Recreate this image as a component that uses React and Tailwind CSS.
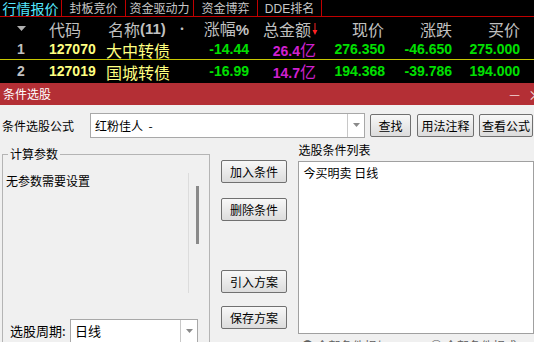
import React from "react";

const CJK = { fontFamily: '"Noto Sans CJK SC", "Liberation Sans", sans-serif' };
const NUM = { fontFamily: '"Liberation Sans", "Noto Sans CJK SC", sans-serif' };

function Btn({ children, className = "" }) {
  return (
    <div
      className={
        "flex h-[23px] items-center justify-center rounded-[2px] border border-[#707070] bg-linear-to-b from-[#f8f8f8] to-[#dcdcdc] text-[12px] leading-none text-black " +
        className
      }
    >
      {children}
    </div>
  );
}

function Arrow() {
  return (
    <svg width="7" height="5" viewBox="0 0 7 5">
      <path d="M0 0 L7 0 L3.5 4 Z" fill="#8a8a8a" />
    </svg>
  );
}

function Row({ idx, code, name, pct, amt, price, chg, buy, tall, line }) {
  return (
    <div
      className={
        "flex items-center " +
        (tall ? "h-[23px] " : "h-[20px] ") +
        (line ? "border-b border-[#c8c800]" : "")
      }
    >
      <div className="w-[42px] text-center text-[14px] font-bold text-[#c0c0c0]" style={NUM}>
        {idx}
      </div>
      <div className="w-[58px] pl-[7px] text-[14px] font-bold text-[#ffff80]" style={NUM}>
        {code}
      </div>
      <div className="w-[95px] pl-[6px] text-[16px] leading-[20px] text-[#ffff80]" style={CJK}>
        {name}
      </div>
      <div className="w-[57px] pr-[3px] text-right text-[14px] font-bold text-[#00e000]" style={NUM}>
        {pct}
      </div>
      <div className="w-[68px] pr-[4px] text-right text-[#d020d0]">
        <span className="text-[14px] font-bold" style={NUM}>
          {amt}
        </span>
        <span className="text-[16px] leading-[20px]" style={CJK}>
          亿
        </span>
      </div>
      <div className="w-[67px] pr-[2px] text-right text-[14px] font-bold text-[#00e000]" style={NUM}>
        {price}
      </div>
      <div className="w-[67px] pr-[2px] text-right text-[14px] font-bold text-[#00e000]" style={NUM}>
        {chg}
      </div>
      <div className="w-[68px] pr-[2px] text-right text-[14px] font-bold text-[#00e000]" style={NUM}>
        {buy}
      </div>
    </div>
  );
}

export default function App() {
  return (
    <div className="h-[342px] w-[534px] overflow-hidden bg-[#f0f0f0]" style={CJK}>
      {/* Quote board */}
      <div className="bg-black">
        <div className="flex h-[17px] border-b border-[#c00000] text-[12px] leading-[16px] text-[#c8c8c8]">
          <div className="w-[62px] border-r border-[#c00000] text-center text-[14px] text-[#55e8ff]">行情报价</div>
          <div className="w-[64px] border-r border-[#c00000] text-center">封板竞价</div>
          <div className="w-[68px] border-r border-[#c00000] text-center">资金驱动力</div>
          <div className="w-[64px] border-r border-[#c00000] text-center">资金博弈</div>
          <div className="w-[64px] border-r border-[#c00000] text-center" style={NUM}>
            DDE<span style={CJK}>排名</span>
          </div>
        </div>
        <div className="flex h-[23px] items-center text-[16px] leading-[20px] text-[#c0c0c0]">
          <div className="flex w-[42px] justify-center">
            <svg width="9" height="5" viewBox="0 0 9 5">
              <path d="M0 0 L9 0 L4.5 5 Z" fill="#b0b0b0" />
            </svg>
          </div>
          <div className="w-[58px] pl-[7px]">代码</div>
          <div className="flex w-[95px] items-center pl-[8px]">
            <span>名称</span>
            <span className="text-[15px] font-bold" style={NUM}>
              (11)
            </span>
            <span className="ml-[10px] text-[12px]">•</span>
          </div>
          <div className="w-[57px] pr-[3px] text-right">
            涨幅<span className="text-[15px] font-bold" style={NUM}>%</span>
          </div>
          <div className="flex w-[68px] items-center justify-end pr-[2px]">
            <span>总金额</span>
            <svg width="6" height="14" viewBox="0 0 6 14" className="ml-[1px]">
              <path d="M3 1 L3 10" stroke="#ff2020" strokeWidth="1" />
              <path d="M0.5 8 L5.5 8 L3 13 Z" fill="#ff2020" />
            </svg>
          </div>
          <div className="w-[67px] pr-[3px] text-right">现价</div>
          <div className="w-[67px] pr-[2px] text-right">涨跌</div>
          <div className="w-[68px] pr-[2px] text-right">买价</div>
        </div>
        <Row idx="1" code="127070" name="大中转债" pct="-14.44" amt="26.4" price="276.350" chg="-46.650" buy="275.000" line />
        <Row idx="2" code="127019" name="国城转债" pct="-16.99" amt="14.7" price="194.368" chg="-39.786" buy="194.000" tall />
      </div>

      {/* Dialog title */}
      <div className="flex h-[22px] items-center justify-between bg-[#b42f35] pl-[3px] text-[12px] text-white">
        <span>条件选股</span>
        <div className="mr-[-8px] flex items-center gap-[8px] text-[#f3d8d8]">
          <span className="text-[12px]">—</span>
          <span className="text-[14px]">×</span>
        </div>
      </div>

      {/* Formula row */}
      <div className="mt-[8px] flex h-[25px] items-center text-[12px] text-black">
        <div className="w-[90px] pl-[2px]">条件选股公式</div>
        <div className="flex h-[25px] w-[275px] items-stretch border border-[#a8a8a8] bg-white">
          <div className="flex flex-1 items-center pl-[4px]">红粉佳人&nbsp;&nbsp;-</div>
          <div className="flex w-[17px] items-center justify-center border-l border-[#c8c8c8]">
            <Arrow />
          </div>
        </div>
        <Btn className="ml-[5px] w-[41px]">查找</Btn>
        <Btn className="ml-[6px] w-[57px]">用法注释</Btn>
        <Btn className="ml-[5px] w-[54px]">查看公式</Btn>
      </div>

      {/* Main area */}
      <div className="mt-[4px] flex items-start text-[12px] text-black">
        <fieldset className="ml-[2px] mt-[5px] h-[210px] w-[208px] border border-[#b4b4b4]">
          <legend className="ml-[5px] px-[2px] leading-[14px]">计算参数</legend>
          <div className="flex pt-[12px]">
            <div className="flex-1 pl-[3px] leading-[16px]">无参数需要设置</div>
            <div className="h-[120px] w-[21px] border-l border-[#dcdcdc]">
              <div className="ml-[7px] mt-[13px] h-[58px] w-[3px] bg-[#8a8a8a]" />
            </div>
          </div>
          <div className="mt-[26px] flex items-center">
            <div className="w-[67px] pl-[7px] text-[13px]">选股周期:</div>
            <div className="flex h-[24px] w-[128px] items-stretch border border-[#a8a8a8] bg-white">
              <div className="flex flex-1 items-center pl-[4px] text-[13px]">日线</div>
              <div className="flex w-[17px] items-center justify-center border-l border-[#c8c8c8]">
                <Arrow />
              </div>
            </div>
          </div>
        </fieldset>

        <div className="ml-[11px] mt-[18px] flex w-[67px] flex-col">
          <Btn>加入条件</Btn>
          <Btn className="mt-[15px]">删除条件</Btn>
          <Btn className="mt-[49px]">引入方案</Btn>
          <Btn className="mt-[13px]">保存方案</Btn>
        </div>

        <div className="ml-[11px] flex w-[236px] flex-col">
          <div className="leading-[16px]">选股条件列表</div>
          <div className="mt-[3px] h-[173px] border border-[#a0a0a0] bg-white pl-[4px] pt-[3px] leading-[16px]">
            今买明卖 日线
          </div>
          <div className="mt-[3px] flex text-[12px] text-[#606060]">
            <span className="ml-[3px]">● 全部条件相与</span>
            <span className="ml-[42px]">○ 全部条件相或</span>
          </div>
        </div>
      </div>
    </div>
  );
}
